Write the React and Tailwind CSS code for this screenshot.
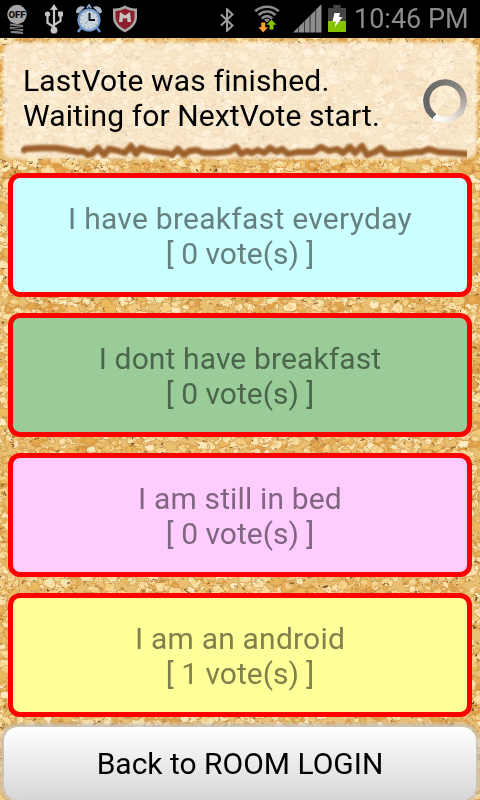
import React from "react";

const options = [
  { label: "I have breakfast everyday", votes: 0, color: "bg-[#ccffff] text-[#668080]", spacing: "tracking-[0.27px]" },
  { label: "I dont have breakfast", votes: 0, color: "bg-[#99cc99] text-[#4c664c]", spacing: "tracking-[0.12px]" },
  { label: "I am still in bed", votes: 0, color: "bg-[#ffccff] text-[#806680]", spacing: "tracking-[0.15px]" },
  { label: "I am an android", votes: 1, color: "bg-[#ffff99] text-[#80804c]", spacing: "tracking-[0.2px]" },
];

// Seeded random so the cork looks the same on every load
const createRandom = (seed) => () => {
  seed = (seed + 0x6d2b79f5) | 0;
  let t = Math.imul(seed ^ (seed >>> 15), 1 | seed);
  t = (t + Math.imul(t ^ (t >>> 7), 61 | t)) ^ t;
  return ((t ^ (t >>> 14)) >>> 0) / 4294967296;
};

const grainColors = ["#f3cf88", "#efc473", "#f9e0a4", "#e5b05a", "#f7d693", "#eab95f", "#fdeabb", "#dfa04a", "#f6d99a", "#fbe3ae"];
const speckColors = ["#6e3f14", "#8a5420", "#54341a", "#a66a2a", "#855020"];

const blob = (random, cx, cy, size, squash) => {
  const points = [];
  for (let k = 0; k < 8; k++) {
    const angle = (k / 8) * Math.PI * 2;
    const r = size * (0.65 + random() * 0.5);
    points.push(`${(cx + Math.cos(angle) * r).toFixed(1)},${(cy + Math.sin(angle) * r * squash).toFixed(1)}`);
  }
  return points.join(" ");
};

const buildCork = () => {
  const random = createRandom(4271);
  const pick = (list) => list[Math.floor(random() * list.length)];
  const grains = [];
  const specks = [];
  for (let i = 0; i < 9000; i++) {
    const cx = random() * 490 - 5;
    const cy = 34 + random() * 770;
    const size = 3 + random() * 5;
    grains.push({
      points: blob(random, cx, cy, size, 0.8),
      inner: blob(random, cx - 0.5, cy - 0.5, size * 0.5, 0.7),
      fill: pick(grainColors),
      light: random() < 0.5 ? "#fff0c4" : "#f0bd60",
    });
  }
  for (let i = 0; i < 4200; i++) {
    const angle = random() * Math.PI * 2;
    const length = 1 + random() * 4;
    const dx = Math.cos(angle) * length;
    const dy = Math.sin(angle) * length * 0.7;
    specks.push({
      d: `M${(random() * 480).toFixed(1)} ${(36 + random() * 764).toFixed(1)}q${(dx * 0.7 + random() * 2 - 1).toFixed(1)} ${(dy * 0.3 + random() * 2 - 1).toFixed(1)} ${dx.toFixed(1)} ${dy.toFixed(1)}`,
      stroke: pick(speckColors),
      width: 0.5 + random() * random() * 1.8,
    });
  }
  return { grains, specks };
};

const cork = buildCork();

const CorkBoard = () => (
  <svg className="absolute inset-0 -z-10" width="480" height="800" viewBox="0 0 480 800">
    <defs>
      <filter id="rough" x="0" y="0" width="100%" height="100%" colorInterpolationFilters="sRGB">
        <feTurbulence type="fractalNoise" baseFrequency="0.15" numOctaves="2" seed="8" />
        <feDisplacementMap in="SourceGraphic" scale="5" xChannelSelector="R" yChannelSelector="G" />
        <feGaussianBlur stdDeviation="0.3" />
      </filter>
    </defs>
    <rect width="480" height="800" fill="#e9bf72" />
    <g filter="url(#rough)">
      {cork.grains.map((grain, i) => (
        <g key={i}>
          <polygon points={grain.points} fill={grain.fill} stroke="#c68a3c" strokeWidth="0.6" />
          <polygon points={grain.inner} fill={grain.light} opacity="0.45" />
        </g>
      ))}
      {cork.specks.map((speck, i) => (
        <path key={i} d={speck.d} fill="none" stroke={speck.stroke} strokeWidth={speck.width} opacity="0.8" />
      ))}
    </g>
  </svg>
);

const BulbIcon = () => (
  <svg width="22" height="30" viewBox="0 0 22 30">
    <circle cx="11" cy="10.500" r="9.700" fill="#a6a6a6" />
    <text x="11" y="14.300" textAnchor="middle" textLength="17" lengthAdjust="spacingAndGlyphs" fontFamily="Roboto, sans-serif" fontSize="8.500" fontWeight="900" fill="#111">OFF</text>
    <path d="M4 20.500l13 1.500L4 24l13 2L5 28l12 1" fill="none" stroke="#808080" strokeWidth="1.900" />
  </svg>
);

const UsbIcon = () => (
  <svg width="20" height="30" viewBox="0 0 20 30" fill="#c6c6c6">
    <path d="M10 0l4 6H6z" />
    <path d="M10 4v23M10 23L3.500 19v-8M10 21l6.500-4V9" fill="none" stroke="#c6c6c6" strokeWidth="2.200" />
    <circle cx="3.500" cy="10" r="2.600" />
    <rect x="14" y="7.500" width="5" height="5" />
    <circle cx="10" cy="26.200" r="3.400" />
  </svg>
);

const AlarmIcon = () => (
  <svg width="28" height="30" viewBox="0 0 28 30">
    <path d="M6 24l-3 4M22 24l3 4" stroke="#6d94ce" strokeWidth="2.500" />
    <path d="M1 8.500C1 3 6 1 10 3L3.500 9.500zM27 8.500C27 3 22 1 18 3l6.500 6.500z" fill="#a9b7c6" />
    <path d="M12 4l2-3 2 3" fill="none" stroke="#8ca4c4" strokeWidth="1.800" />
    <circle cx="14" cy="16" r="10.500" fill="#c6d3dc" stroke="#7199c8" strokeWidth="2.200" />
    <circle cx="14" cy="16" r="8.200" fill="none" stroke="#87949e" strokeWidth="1.200" strokeDasharray="0.900 3.390" />
    <path d="M14.500 9v7H20" fill="none" stroke="#151515" strokeWidth="2" />
    <path d="M14 16l-4 4" stroke="#889" strokeWidth="0.800" />
  </svg>
);

const ShieldIcon = () => (
  <svg width="26" height="28" viewBox="0 0 26 28">
    <path d="M13 .5C9 3 5 3.500 1 3.500V12c0 7 5 12 12 15.500C20 24 25 19 25 12V3.500C21 3.500 17 3 13 .5z" fill="#aaa6a2" />
    <path d="M13 3.500C10 5 7 5.700 3.500 6v6c0 5.500 4 9.500 9.500 12.500 5.500-3 9.500-7 9.500-12.500V6C19 5.700 16 5 13 3.500z" fill="#8e1e2c" />
    <path d="M7 17L8 7l5 3.500L18 7l1 10h-3.500l-.5-4.500-2 1.500-2-1.500-.5 4.500z" fill="#cac5c2" />
  </svg>
);

const BluetoothIcon = () => (
  <svg width="14" height="24" viewBox="0 0 14 24">
    <path d="M1 6.500L12.500 17.500 7 22.800V1.200l5.500 5.300L1 17.500" fill="none" stroke="#a0a0a0" strokeWidth="1.900" />
  </svg>
);

const WifiIcon = () => (
  <svg width="26" height="28" viewBox="0 0 26 28">
    <g fill="none" stroke="#8c8c8c" strokeWidth="2.600">
      <path d="M1.200 6.200C8 .2 18 .2 24.800 6.200" />
      <path d="M4.500 10C9.500 5.300 16.500 5.300 21.500 10" />
      <path d="M7.700 13.500C11 10.500 15 10.500 18.300 13.500" />
    </g>
    <path d="M10 14.800Q13 12.800 16 14.800L13 17.500z" fill="#8c8c8c" />
    <path d="M7.200 17.500h4v4.700H14l-4.800 5.300-4.800-5.300h2.800z" fill="#ff9d2e" />
    <path d="M15.500 24.500v-4.700h-3l5-5.300 4.800 5.300h-2.800v4.700z" fill="#86c400" />
  </svg>
);

const SignalIcon = () => (
  <svg width="29" height="28" viewBox="0 0 29 28">
    <path d="M0 27.500L5 22.500v5zM5.600 22l5.400-5.400v10.900H5.600zM11.600 16l5.100-5.200v16.700h-5.100zM17.300 10.200L22.500 5v22.500h-5.200zM23.100 4.400L28.500 -1v28.500h-5.400z" fill="#8c8c8c" />
  </svg>
);

const BatteryIcon = () => (
  <svg width="18" height="27" viewBox="0 0 18 27">
    <path d="M0 3h5.500V0h7v3H18v13H0z" fill="#464646" />
    <path d="M0 16h18v11H0z" fill="#86c400" />
    <path d="M6.500 8H12l-1 4h3.500L6.500 22.500 8 16.500H4.500z" fill="#fff" />
  </svg>
);

const StatusBar = () => (
  <div className="flex h-[38px] shrink-0 items-center bg-black pl-[6px]">
    <BulbIcon />
    <div className="ml-[16px] flex">
      <UsbIcon />
    </div>
    <div className="ml-[11px] flex">
      <AlarmIcon />
    </div>
    <div className="ml-[9px] flex">
      <ShieldIcon />
    </div>
    <div className="ml-[82px] mt-[2px] flex">
      <BluetoothIcon />
    </div>
    <div className="ml-[20px] flex">
      <WifiIcon />
    </div>
    <div className="ml-[13px] mt-[-1px] flex">
      <SignalIcon />
    </div>
    <div className="ml-[6px] mt-[-2px] flex">
      <BatteryIcon />
    </div>
    <span className="ml-[8px] whitespace-nowrap text-[27px] leading-[38px] text-[#8c8c8c]">10:46 PM</span>
  </div>
);

const Spinner = () => (
  <div className="h-[44px] w-[44px] rounded-full bg-[conic-gradient(from_215deg,#6a6a6a_0deg,#666666_60deg,#646464e6_120deg,#707070d9_180deg,#8a8a8abf_230deg,#b8b8b8bf_265deg,#e8e4e0cc_305deg,#ffffff_350deg,#ffffff_360deg)] [mask:radial-gradient(circle,transparent_15px,black_16px)]" />
);

const JaggedLine = () => (
  <svg className="block" width="446" height="18" viewBox="0 0 446 18">
    <defs>
      <filter id="soft" x="-2%" y="-60%" width="104%" height="220%">
        <feGaussianBlur stdDeviation="0.8" />
      </filter>
    </defs>
    <path
      d="M1 11l3-3 16-1 15 0 12 2 10 2 5-1 5 4 4-1 6-6 6 7 5-6 6 1 10 3 6-7 5 8 5-6 5 2 9 2 12 1 5 2 6-6 6 6 5-4 8-1 6 3 12 0 9-1 6-1 6-4 5 7 6-3 5 2 6-3 6 3 6-5 7 4 5-3 6 5 9-2 16 0 8-5 8 4 8-2 6 4 7-6 5 6 7-7 5 9 8-3 6-4 6 6 14 0 14-2 6 0 8-3 9 3 16 1 13 1 4 2 5-4 4 4"
      fill="none"
      stroke="#9c602c"
      strokeWidth="6.4"
      strokeLinejoin="round"
      filter="url(#soft)"
    />
  </svg>
);

const VoteCard = ({ option }) => (
  <button
    disabled
    className={`flex h-[124px] w-full shrink-0 flex-col items-center justify-center rounded-[12px] border-[5px] border-[#ff0000] pt-[1px] text-[30px] leading-[35px] ${option.color}`}
  >
    <span className={option.spacing}>{option.label}</span>
    <span>[ {option.votes} vote(s) ]</span>
  </button>
);

const App = () => {
  return (
    <div className="relative isolate flex h-[800px] w-[480px] flex-col overflow-hidden font-['Roboto',sans-serif] [font-variant-ligatures:none]">
      <CorkBoard />
      <StatusBar />

      {/* Message */}
      <div className="mx-[5px] mt-[6px] h-[113px] shrink-0 rounded-[8px] bg-[#fff5e8]/75 shadow-[0_0_3px_2px_rgba(255,245,232,0.7)]">
        <div className="flex items-center justify-between pl-[18px] pr-[8px] pt-[19px]">
          <p className="whitespace-nowrap text-[30px] leading-[35px] text-black">
            <span className="tracking-[0.18px]">LastVote was finished.</span>
            <br />
            <span className="tracking-[0.12px]">Waiting for NextVote start.</span>
          </p>
          <div className="mt-[6px]">
            <Spinner />
          </div>
        </div>
        <div className="mt-[8px] pl-[16px]">
          <JaggedLine />
        </div>
      </div>

      {/* Vote options */}
      <div className="mt-[16px] flex flex-col gap-4 px-2">
        {options.map((option) => (
          <VoteCard key={option.label} option={option} />
        ))}
      </div>

      <button className="mx-[4px] mt-[10px] h-[73px] shrink-0 rounded-[14px] bg-gradient-to-b from-white to-[#d6d6d6] pb-[1px] text-[30px] leading-[35px] text-black shadow-[0_0_4px_3px_#c9c5c2]">
        Back to ROOM LOGIN
      </button>
    </div>
  );
};

export default App;
